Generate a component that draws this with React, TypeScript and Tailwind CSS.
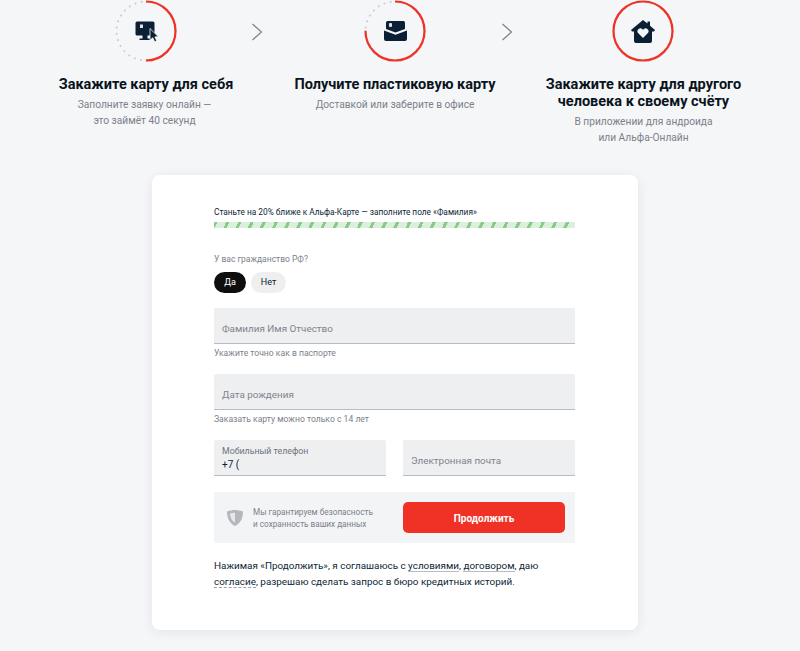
const font = "font-['Roboto',sans-serif]";

function Arrow() {
  return (
    <svg width="12" height="18" viewBox="0 0 12 18" fill="none" className="shrink-0">
      <path d="M1.5 1l9 8-9 8" stroke="#7d828c" strokeWidth="1.2" />
    </svg>
  );
}

function StepCircle({ progress, children }: { progress: number; children: React.ReactNode }) {
  const c = 2 * Math.PI * 29.5;
  return (
    <div className="relative w-[62px] h-[62px] shrink-0">
      <svg width="62" height="62" viewBox="0 0 62 62" fill="none">
        <circle cx="31" cy="31" r="29.5" stroke="#c9ccd2" strokeWidth="2" strokeLinecap="round" strokeDasharray="0.1 6.3" />
        <circle
          cx="31"
          cy="31"
          r="29.5"
          stroke="#f03226"
          strokeWidth="2.2"
          strokeDasharray={`${c * progress} ${c}`}
          transform="rotate(-90 31 31)"
        />
      </svg>
      <div className="absolute inset-0 flex items-center justify-center">{children}</div>
    </div>
  );
}

function Step({ title, sub, width, subClass }: { title: string[]; sub: string[]; width: string; subClass?: string }) {
  return (
    <div className={`${width} text-center`}>
      <div className="text-[14.5px] leading-[17px] font-bold text-[#0a1420]">
        {title.map((t) => (
          <div key={t}>{t}</div>
        ))}
      </div>
      <div className={`mt-[4px] text-[10.2px] leading-[16px] text-[#7b818a] ${subClass ?? ""}`}>
        {sub.map((t) => (
          <div key={t}>{t}</div>
        ))}
      </div>
    </div>
  );
}

function Field({ placeholder, hint, label, value, className }: { placeholder?: string; hint?: string; label?: string; value?: string; className?: string }) {
  return (
    <div className={className}>
      <div className="h-9 bg-[#eeeff1] border-b border-[#b9bcc2] rounded-t-[2px] px-2 flex flex-col justify-center">
        {label ? (
          <>
            <div className="text-[8.8px] leading-[12px] text-[#6f747c]">{label}</div>
            <div className="text-[10px] leading-[12px] mt-[2px] text-[#0b1f35]">{value}</div>
          </>
        ) : (
          <div className="mt-[7px] text-[9.9px] text-[#7f848c]">{placeholder}</div>
        )}
      </div>
      {hint && <div className="mt-[3px] text-[8.6px] leading-[12px] text-[#7b818a]">{hint}</div>}
    </div>
  );
}

export default function App() {
  return (
    <div className={`${font} w-[800px] h-[651px] overflow-hidden bg-[#f5f6f8]`}>
      {/* Steps */}
      <div className="flex items-start pl-[115px]">
        <StepCircle progress={0.5}>
          <svg width="23" height="22" viewBox="0 0 23 22">
            <rect x="0.5" y="1.5" width="19" height="14" rx="1.5" fill="#0b1f35" />
            <rect x="7.5" y="15" width="5" height="4" fill="#0b1f35" />
            <rect x="4.5" y="18.5" width="11" height="1.5" fill="#0b1f35" />
            <rect x="5" y="4.5" width="3" height="3.5" fill="#dfe3e8" />
            <path d="M15 8.500v11.500l2.800-2.200 1.900 4 2-1-1.800-3.900 3.400-.3z" fill="#0b1f35" stroke="#f5f6f8" strokeWidth="0.8" />
          </svg>
        </StepCircle>
        <div className="mt-[23px] ml-[74px]">
          <Arrow />
        </div>
        <div className="ml-[101px]">
          <StepCircle progress={0.75}>
            <svg width="23" height="20" viewBox="0 0 23 20">
              <path d="M2 1.500A1.500 1.500 0 0 1 3.500 0h16A1.500 1.500 0 0 1 21 1.500V8l-9.500 3.500L2 8z" fill="#0b1f35" />
              <rect x="5" y="2" width="3" height="4" rx="1" fill="#dfe3e8" />
              <path d="M0 9.500l11.500 4.200L23 9.500V18a2 2 0 0 1-2 2H2a2 2 0 0 1-2-2z" fill="#0b1f35" />
            </svg>
          </StepCircle>
        </div>
        <div className="mt-[23px] ml-[75px]">
          <Arrow />
        </div>
        <div className="ml-[99px]">
          <StepCircle progress={1}>
            <svg width="24" height="23" viewBox="0 0 24 23">
              <path d="M12 0l4.500 3.600V1.500h2.500v4.200L24 10l-1 1.500h-2V21a2 2 0 0 1-2 2H5a2 2 0 0 1-2-2v-9.500H1L0 10z" fill="#0b1f35" />
              <path d="M12 18l-4.700-4.700a2.900 2.900 0 0 1 4.100-4.100l.6.6.6-.6a2.900 2.900 0 0 1 4.100 4.100z" fill="#f5f6f8" />
            </svg>
          </StepCircle>
        </div>
      </div>
      <div className="flex items-start pl-[21px] mt-[14px]">
        <Step width="w-[250px]" subClass="mr-[3px]" title={["Закажите карту для себя"]} sub={["Заполните заявку онлайн —", "это займёт 40 секунд"]} />
        <Step width="w-[248px]" title={["Получите пластиковую карту"]} sub={["Доставкой или заберите в офисе"]} />
        <Step width="w-[249px]" title={["Закажите карту для другого", "человека к своему счёту"]} sub={["В приложении для андроида", "или Альфа-Онлайн"]} />
      </div>

      {/* Form card */}
      <div className="ml-[152px] mt-[29px] w-[486px] h-[455px] bg-white rounded-lg shadow-[0_2px_12px_rgba(11,31,53,0.08)] pl-[62px] pr-[63px] pt-[31px]">
        <div className="text-[8.3px] leading-[12px] text-[#0b1f35]">Станьте на 20% ближе к Альфа-Карте — заполните поле «Фамилия»</div>
        <div className="mt-[4px] h-[6px] rounded-[1px] bg-[repeating-linear-gradient(115deg,#86cc86_0px,#86cc86_3px,#dcefdc_3px,#dcefdc_11px)]"></div>

        <div className="mt-[25px] text-[8.5px] leading-[12px] text-[#7b818a]">У вас гражданство РФ?</div>
        <div className="mt-[7px] flex gap-[5px]">
          <div className="w-8 h-[21px] rounded-full bg-[#0e0e0e] text-white text-[9px] pt-[1px] flex items-center justify-center">Да</div>
          <div className="w-[35px] h-[21px] rounded-full bg-[#efefef] text-[#0b1f35] text-[9px] pt-[1px] flex items-center justify-center">Нет</div>
        </div>

        <Field className="mt-[15px]" placeholder="Фамилия Имя Отчество" hint="Укажите точно как в паспорте" />
        <Field className="mt-[15px]" placeholder="Дата рождения" hint="Заказать карту можно только с 14 лет" />

        <div className="mt-[15px] flex gap-[17px]">
          <Field className="flex-1" label="Мобильный телефон" value="+7 (" />
          <Field className="flex-1" placeholder="Электронная почта" />
        </div>

        <div className="mt-[16px] h-[51px] bg-[#f3f4f6] flex items-center">
          <svg width="16" height="16" viewBox="0 0 16 16" className="ml-[13px] mt-[1px] shrink-0">
            <path d="M0 1.5C3 .5 5.500 0 8 0s5 .5 8 1.500C16 9 13 13.500 8 16 3 13.500 0 9 0 1.500z" fill="#b4b7bc" />
            <path d="M3 3.500C4.500 3.100 6 2.800 8 2.700v10C5 11 3.300 8 3 3.500z" fill="#e7e8ea" />
          </svg>
          <div className="ml-[10px] w-[150px] text-[8.2px] leading-[12px] text-[#7b818a]">
            <div>Мы гарантируем безопасность</div>
            <div>и сохранность ваших данных</div>
          </div>
          <div className="w-[162px] h-[31px] rounded-[5px] bg-[#f03226] text-white text-[10px] font-bold pt-[1px] flex items-center justify-center">Продолжить</div>
        </div>

        <div className="mt-[15px] text-[9.9px] leading-[16px] text-[#0b1f35]">
          <div>
            Нажимая «Продолжить», я соглашаюсь с <span className="border-b border-[#b9bcc2]">условиями</span>, <span className="border-b border-[#b9bcc2]">договором</span>, даю
          </div>
          <div>
            <span className="border-b border-dashed border-[#9a9ea5]">согласие</span>, разрешаю сделать запрос в бюро кредитных историй.
          </div>
        </div>
      </div>
    </div>
  );
}
